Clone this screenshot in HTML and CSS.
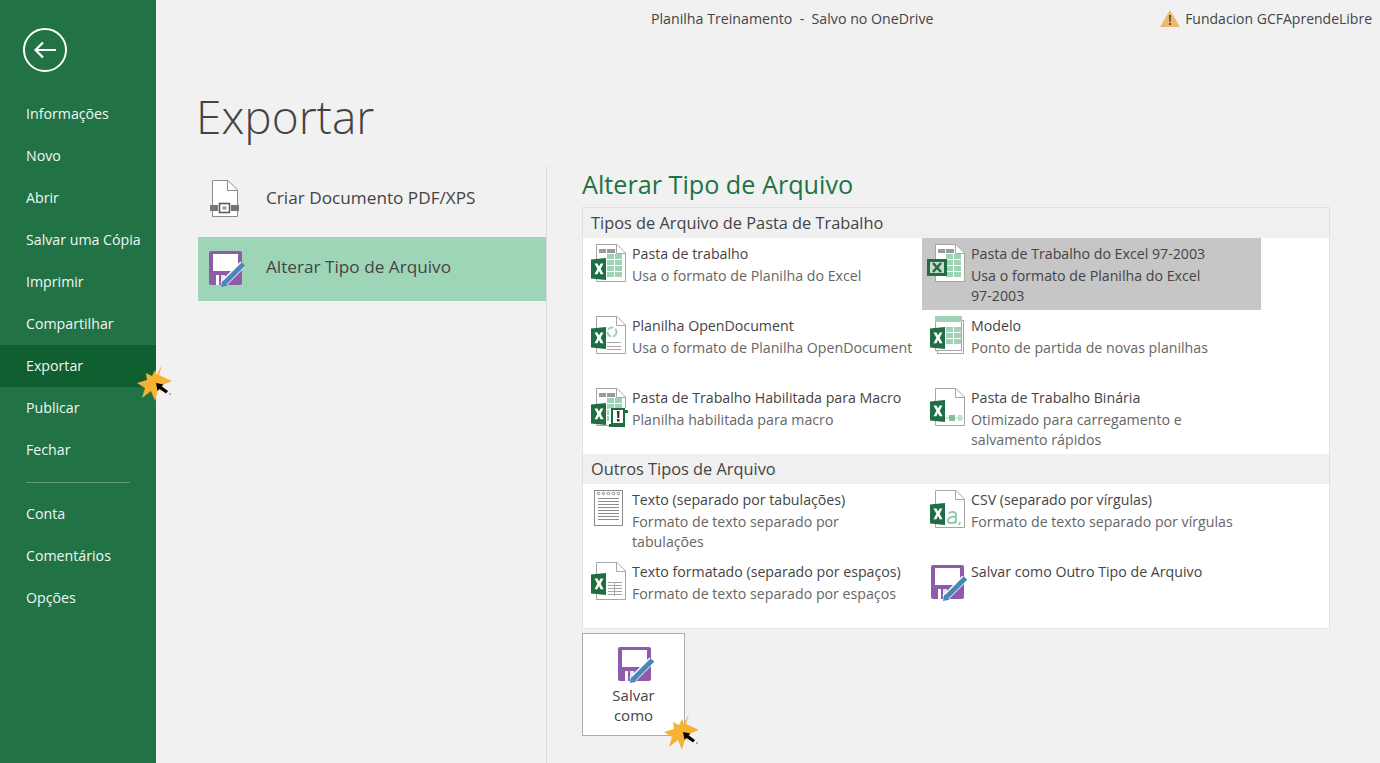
FILE: index.html
```html
<!DOCTYPE html>
<html lang="pt">
<head>
<meta charset="utf-8">
<title>Exportar</title>
<link rel="stylesheet" href="styles.css">
</head>
<body>
<svg class="defs" width="0" height="0" aria-hidden="true">
  <defs>
    <symbol id="burst" viewBox="0 0 36 38">
      <polygon fill="#f5b233" points="25,0 22,11 35,17 25,21 29,28 21,26 18,37 14,27 5,34 8,24 0,19 10,16 9,9 15,12 18,6 20,11"/>
      <path fill="#000" d="M19 19l7.500 1.500-2 1.800 6.500 4.700-2 2.500-6.500-4.700-1.900 2.200z"/>
      <circle cx="33" cy="30" r="1" fill="#999"/>
    </symbol>
    <symbol id="badge" viewBox="0 0 16 22">
      <path fill="#1e6e42" d="M0 1.500L15 0V22L0 20.500z"/>
      <path fill="#fff" d="M3.500 5.500h3l1.500 3 1.600-3h2.800L9.700 10.800l2.900 5.400h-3L8 13l-1.600 3.200H3.500l2.900-5.400z"/>
    </symbol>
    <symbol id="doc" viewBox="0 0 38 40">
      <path fill="#fff" stroke="#a6a6a6" d="M6.500.5H27L35.500 9V37.500H6.500z"/>
      <path fill="none" stroke="#a6a6a6" d="M26.500.5V9.500H35.500"/>
    </symbol>
    <symbol id="grid" viewBox="0 0 38 40">
      <g fill="#9a9a9a"><rect x="9" y="5" width="7" height="4"/><rect x="17" y="5" width="8" height="4"/></g>
      <g fill="#9fd3b5">
        <rect x="17" y="10" width="7" height="5"/><rect x="25" y="10" width="7" height="5"/>
        <rect x="17" y="16" width="7" height="5"/><rect x="25" y="16" width="7" height="5"/>
        <rect x="17" y="22" width="7" height="5"/><rect x="25" y="22" width="7" height="5"/>
        <rect x="17" y="28" width="7" height="5"/><rect x="25" y="28" width="7" height="5"/>
      </g>
    </symbol>
    <symbol id="save" viewBox="0 0 36 37">
      <rect width="33" height="34" rx="2" fill="#8e5cab"/>
      <rect x="4" y="3" width="25" height="17" fill="#fff"/>
      <rect x="7" y="24" width="3" height="10" fill="#fff"/>
      <rect x="12" y="24" width="4" height="10" fill="#e9dff0"/>
      <path fill="none" stroke="#fff" stroke-width="7" d="M14 33L34 13"/>
      <path fill="none" stroke="#4a86b8" stroke-width="5" d="M15 32.500L34.500 13"/>
      <path fill="#4a86b8" d="M12 36l1.200-6.500 5.300 5.300z"/>
    </symbol>
  </defs>
</svg>

<div class="app">
  <nav class="side">
    <div class="back">
      <svg class="back-icon" width="46" height="46" viewBox="0 0 46 46"><circle cx="23" cy="23" r="21" fill="none" stroke="#fff" stroke-width="2"/><path fill="none" stroke="#fff" stroke-width="2.200" d="M34 23H13.500M21 15.500L13.500 23l7.500 7.500"/></svg>
    </div>
    <a class="nav-item">Informações</a>
    <a class="nav-item">Novo</a>
    <a class="nav-item">Abrir</a>
    <a class="nav-item">Salvar uma Cópia</a>
    <a class="nav-item">Imprimir</a>
    <a class="nav-item">Compartilhar</a>
    <a class="nav-item nav-active">Exportar
      <svg class="burst burst-nav"><use href="#burst"/></svg>
    </a>
    <a class="nav-item">Publicar</a>
    <a class="nav-item">Fechar</a>
    <div class="nav-sep"></div>
    <a class="nav-item">Conta</a>
    <a class="nav-item">Comentários</a>
    <a class="nav-item">Opções</a>
  </nav>

  <main class="main">
    <header class="top">
      <div class="doc-title">Planilha Treinamento&nbsp; -&nbsp; Salvo no OneDrive</div>
      <div class="account">
        <svg width="20" height="17" viewBox="0 0 20 17"><path fill="#e9b877" d="M10 0l10 17H0z"/><path fill="#6b4a22" d="M9 5h2l-.3 7H9.300zM9 13h2v2H9z"/></svg>
        <span>Fundacion GCFAprendeLibre</span>
      </div>
    </header>
    <h1 class="page-title">Exportar</h1>
    <div class="columns">
      <div class="left">
        <div class="left-item left-pdf">
          <svg class="left-icon" width="30" height="38" viewBox="0 0 30 38">
            <path fill="#fff" stroke="#8c8c8c" d="M3.500.5H19L28.500 10V36.500H3.500z"/>
            <path fill="none" stroke="#8c8c8c" d="M18.500.5V10.500H28.500"/>
            <rect x="1" y="25" width="8" height="6" fill="#777"/><rect x="22" y="25" width="8" height="6" fill="#777"/>
            <rect x="10.500" y="23.500" width="10" height="9" fill="#fff" stroke="#555" stroke-width="1.500"/>
            <rect x="13.500" y="26.500" width="4" height="3" fill="#999"/>
          </svg>
          <span>Criar Documento PDF/XPS</span>
        </div>
        <div class="left-item left-active">
          <svg class="left-icon left-save"><use href="#save"/></svg>
          <span>Alterar Tipo de Arquivo</span>
        </div>
      </div>

      <section class="right">
        <h2 class="right-title">Alterar Tipo de Arquivo</h2>
        <div class="panel">
          <div class="panel-head">Tipos de Arquivo de Pasta de Trabalho</div>
          <div class="grid">
            <div class="item">
              <svg class="ico" viewBox="0 0 38 40"><use href="#doc"/><use href="#grid"/><use href="#badge" x="1" y="14" width="16" height="22"/></svg>
              <div class="txt"><div class="t">Pasta de trabalho</div><div class="d">Usa o formato de Planilha do Excel</div></div>
            </div>
            <div class="item item-sel">
              <svg class="ico" viewBox="0 0 38 40">
                <use href="#doc"/><use href="#grid"/>
                <rect x="-2" y="15" width="20" height="17" fill="#1e6e42"/>
                <rect x="1" y="18" width="14" height="11" fill="#c9d6cd"/>
                <path stroke="#1e6e42" stroke-width="2.500" d="M4 19l8 9M12 19l-8 9"/>
              </svg>
              <div class="txt"><div class="t">Pasta de Trabalho do Excel 97-2003</div><div class="d">Usa o formato de Planilha do Excel<br>97-2003</div></div>
            </div>
            <div class="item">
              <svg class="ico" viewBox="0 0 38 40">
                <use href="#doc"/>
                <circle cx="22" cy="16" r="4.500" fill="none" stroke="#9fd3b5" stroke-width="2" stroke-dasharray="6 2"/>
                <path stroke="#a6a6a6" d="M17 26.500h14M17 30.500h14M17 33.500h14"/>
                <use href="#badge" x="1" y="11" width="16" height="22"/>
              </svg>
              <div class="txt"><div class="t">Planilha OpenDocument</div><div class="d">Usa o formato de Planilha OpenDocument</div></div>
            </div>
            <div class="item">
              <svg class="ico" viewBox="0 0 38 40">
                <rect x="8.500" y="4.500" width="26" height="33" fill="#fff" stroke="#a6a6a6"/>
                <rect x="6.500" y=".5" width="26" height="34" fill="#fff" stroke="#a6a6a6"/>
                <rect x="6" y="0" width="27" height="6" fill="#9fd3b5"/>
                <g fill="#9fd3b5"><rect x="17" y="11" width="7" height="5"/><rect x="25" y="11" width="7" height="5"/><rect x="17" y="17" width="7" height="5"/><rect x="25" y="17" width="7" height="5"/><rect x="17" y="23" width="7" height="5"/><rect x="25" y="23" width="7" height="5"/></g>
                <use href="#badge" x="1" y="11" width="16" height="22"/>
              </svg>
              <div class="txt"><div class="t">Modelo</div><div class="d">Ponto de partida de novas planilhas</div></div>
            </div>
            <div class="item">
              <svg class="ico" viewBox="0 0 38 40">
                <use href="#doc"/><use href="#grid"/>
                <use href="#badge" x="1" y="15" width="16" height="22"/>
                <rect x="19" y="20" width="19" height="19" fill="#fff"/>
                <path fill="#1e6e42" d="M21 20h14v2h3v3h-3v14H19v-3h2z"/>
                <rect x="23" y="22" width="10" height="13" fill="#fff"/>
                <path fill="#333" d="M27 23h2.500l-.3 7h-1.900zM27 31h2.500v2.500H27z"/>
              </svg>
              <div class="txt"><div class="t">Pasta de Trabalho Habilitada para Macro</div><div class="d">Planilha habilitada para macro</div></div>
            </div>
            <div class="item">
              <svg class="ico" viewBox="0 0 38 40">
                <use href="#doc"/>
                <path stroke="#9fd3b5" d="M16 30h20"/>
                <rect x="20" y="27" width="6" height="6" fill="#7fc09c"/><rect x="29" y="27" width="4" height="6" fill="#bfe0cd"/>
                <use href="#badge" x="1" y="12" width="16" height="22"/>
              </svg>
              <div class="txt"><div class="t">Pasta de Trabalho Binária</div><div class="d">Otimizado para carregamento e<br>salvamento rápidos</div></div>
            </div>
          </div>
          <div class="panel-head">Outros Tipos de Arquivo</div>
          <div class="grid">
            <div class="item">
              <svg class="ico" viewBox="0 0 38 40">
                <rect x="4.500" y=".5" width="28" height="35" fill="#fff" stroke="#8c8c8c"/>
                <path stroke="#8c8c8c" d="M8 8.500h21M8 11.500h21M8 14.500h21M8 17.500h21M8 20.500h21M8 23.500h21M8 26.500h21M8 29.500h21"/>
                <g fill="none" stroke="#8c8c8c"><circle cx="8.500" cy="3.500" r="1.300"/><circle cx="13.500" cy="3.500" r="1.300"/><circle cx="18.500" cy="3.500" r="1.300"/><circle cx="23.500" cy="3.500" r="1.300"/><circle cx="28.500" cy="3.500" r="1.300"/></g>
              </svg>
              <div class="txt"><div class="t">Texto (separado por tabulações)</div><div class="d">Formato de texto separado por<br>tabulações</div></div>
            </div>
            <div class="item">
              <svg class="ico" viewBox="0 0 38 40">
                <use href="#doc"/>
                <path fill="none" stroke="#8fc7a7" stroke-width="1.800" d="M20 23.500c1-2 7-2.500 7 1v9M27 27c-3-1-8 0-8 3.500s6 3.500 8 0M31 32l-1 3"/>
                <use href="#badge" x="1" y="13" width="16" height="22"/>
              </svg>
              <div class="txt"><div class="t">CSV (separado por vírgulas)</div><div class="d">Formato de texto separado por vírgulas</div></div>
            </div>
            <div class="item">
              <svg class="ico" viewBox="0 0 38 40">
                <use href="#doc"/>
                <g stroke="#a6a6a6"><path d="M18 20.500h14M18 23.500h14M18 26.500h14M18 29.500h14M18 32.500h14M24.500 20v14"/></g>
                <use href="#badge" x="1" y="11" width="16" height="22"/>
              </svg>
              <div class="txt"><div class="t">Texto formatado (separado por espaços)</div><div class="d">Formato de texto separado por espaços</div></div>
            </div>
            <div class="item">
              <svg class="ico" viewBox="0 0 38 40"><use href="#save" x="2" y="3" width="36" height="37"/></svg>
              <div class="txt"><div class="t">Salvar como Outro Tipo de Arquivo</div></div>
            </div>
          </div>
        </div>
        <button class="save-btn" type="button">
          <svg class="save-btn-icon"><use href="#save"/></svg>
          <span>Salvar<br>como</span>
          <svg class="burst burst-btn"><use href="#burst"/></svg>
        </button>
      </section>
    </div>
  </main>
</div>
</body>
</html>
```

FILE: styles.css
```css
* { box-sizing: border-box; }
html, body { margin: 0; height: 100%; }
body {
  overflow: hidden;
  background: #f1f1f1;
  color: #444;
  font-family: "Open Sans", "Noto Sans", "Liberation Sans", sans-serif;
  font-size: 14.2px;
}
.defs { position: absolute; }
.app { display: flex; height: 763px; }

.side {
  width: 156px;
  flex: none;
  background: #217346;
  color: #f1f7f3;
  position: relative;
  z-index: 2;
}
.back { height: 93px; padding: 27px 0 0 22px; }
.back-icon { display: block; }
.nav-item {
  display: flex;
  align-items: center;
  height: 42px;
  padding: 0 0 1px 26px;
  position: relative;
  white-space: nowrap;
}
.nav-active { background: #105f30; }
.nav-sep { height: 1px; margin: 11px 26px 10px; background: #5f9b7b; }

.burst { position: absolute; width: 36px; height: 38px; overflow: visible; }
.burst-nav { left: 137px; top: 19px; }
.burst-btn { left: 81px; top: 79px; }

.main { flex: 1; min-width: 0; display: flex; flex-direction: column; }
.top {
  height: 38px;
  flex: none;
  display: flex;
  align-items: center;
  justify-content: space-between;
  padding: 0 8px 1px 495px;
  white-space: nowrap;
}
.account { display: flex; align-items: center; gap: 5px; font-size: 14px; }
.page-title {
  margin: 0;
  height: 128px;
  padding: 44px 0 0 40px;
  font-size: 46px;
  font-weight: 300;
  line-height: 68px;
  color: #444;
}
.columns { flex: 1; display: flex; padding-left: 42px; min-height: 0; }
.left {
  width: 349px;
  flex: none;
  border-right: 1px solid #dcdcdc;
}
.left-item {
  display: flex;
  align-items: center;
  font-size: 17.2px;
  padding-left: 68px;
  position: relative;
  white-space: nowrap;
}
.left-pdf { height: 71px; padding-bottom: 8px; }
.left-active { height: 64px; background: #9fd5b7; width: 348px; padding-bottom: 6px; }
.left-icon { position: absolute; left: 11px; top: 14px; }
.left-save { width: 36px; height: 37px; }

.right { width: 783px; padding-left: 35px; flex: none; }
.right-title {
  margin: 0;
  height: 41px;
  font-size: 25.2px;
  font-weight: 400;
  line-height: 37px;
  color: #217346;
  white-space: nowrap;
}
.panel { width: 748px; height: 422px; background: #fff; border: 1px solid #e1e1e1; }
.panel-head {
  height: 30px;
  background: #f0f0f0;
  padding-left: 8px;
  font-size: 16.35px;
  line-height: 31px;
}
.grid { display: grid; grid-template-columns: 339px 339px; grid-auto-rows: 72px; }
.item { display: flex; position: relative; padding: 6px 0 0 7px; gap: 4px; white-space: nowrap; }
.item-sel { background: #c6c6c6; }
.ico { width: 38px; height: 40px; flex: none; overflow: visible; }
.t { line-height: 20px; color: #444; }
.d { line-height: 20px; color: #666; margin-top: 2px; }
.item-sel .d { color: #444; }

.save-btn {
  position: relative;
  display: flex;
  flex-direction: column;
  align-items: center;
  width: 103px;
  height: 103px;
  margin-top: 4px;
  padding: 13px 0 0;
  background: #fff;
  border: 1px solid #ababab;
  color: #444;
  font: inherit;
  font-size: 15px;
  line-height: 20px;
}
.save-btn-icon { width: 36px; height: 37px; margin: 0 0 1px 4px; }
```
